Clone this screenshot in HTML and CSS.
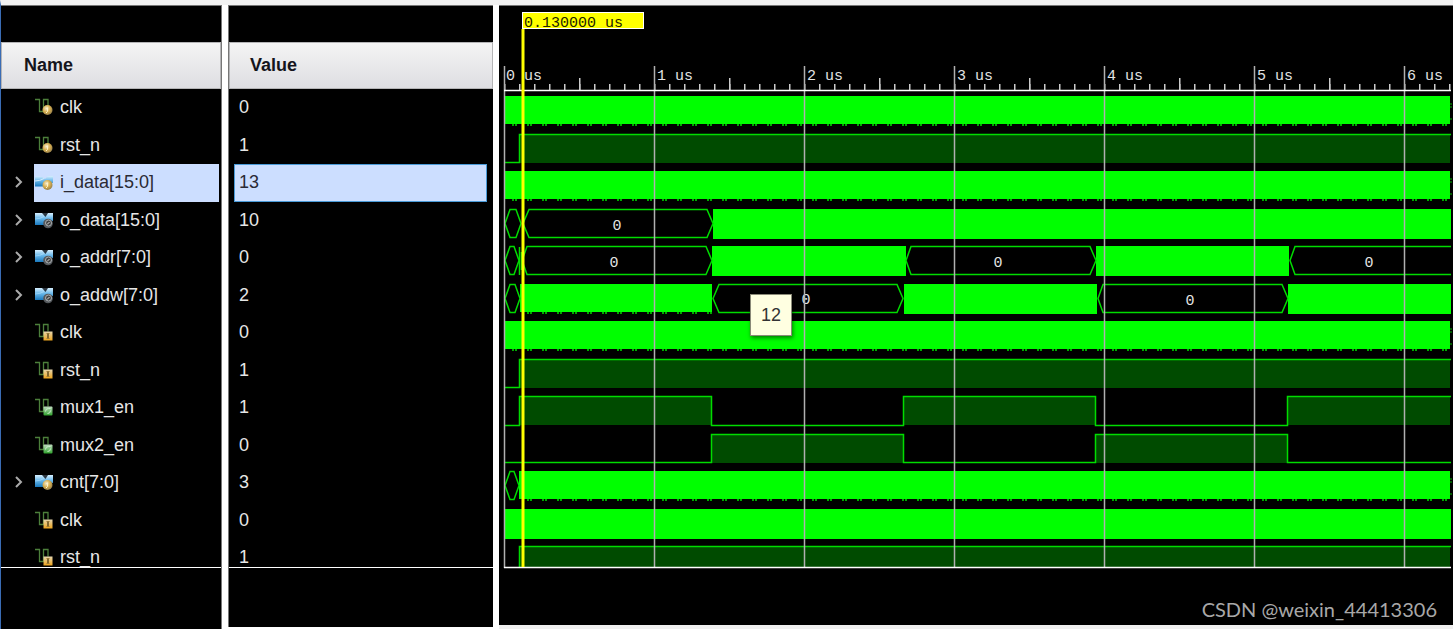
FILE: index.html
```html
<!DOCTYPE html>
<html lang="en">
<head>
<meta charset="utf-8">
<title>Waveform viewer</title>
<link rel="stylesheet" href="styles.css">
</head>
<body>
<svg class="defs" width="0" height="0" aria-hidden="true">
  <defs>
    <linearGradient id="busFill" x1="0" y1="0" x2="0" y2="1">
      <stop offset="0" stop-color="#d6efff"/><stop offset=".45" stop-color="#6cb9ea"/><stop offset="1" stop-color="#1878bd"/>
    </linearGradient>
    <radialGradient id="gold" cx=".4" cy=".35" r=".7">
      <stop offset="0" stop-color="#f4ecd0"/><stop offset=".5" stop-color="#d9b050"/><stop offset="1" stop-color="#8f7a4a"/>
    </radialGradient>
    <linearGradient id="goldSquare" x1="0" y1="0" x2="0" y2="1">
      <stop offset="0" stop-color="#e6d6ae"/><stop offset="1" stop-color="#eda51e"/>
    </linearGradient>
    <linearGradient id="greenSquare" x1="0" y1="0" x2="0" y2="1">
      <stop offset="0" stop-color="#c0dcc0"/><stop offset="1" stop-color="#2fa32c"/>
    </linearGradient>
    <symbol id="wire" viewBox="0 0 18 18"><path d="M0 1.500h4.500v12h4M8.500 14V1.500h4.500v7" fill="none" stroke="#4c7f3b" stroke-width="1.300"/></symbol>
    <symbol id="bus" viewBox="0 0 18 18"><path d="M0 2h18v8l-5-1-4 5H0z" fill="url(#busFill)"/><path d="M7 2l3.500 4L13 2z" fill="#101820" opacity=".85"/><path d="M0 8q5 0 9-2.500" stroke="#b9e4ff" stroke-width=".8" fill="none" opacity=".7"/></symbol>
    <symbol id="bus-light" viewBox="0 0 18 18"><path d="M0 3.500h5q3 0 5 2.500Q12 3 14 3h4v7h-5l-4 3.500H0z" fill="url(#busFill)"/><path d="M0 8q5 0 9-2.500" stroke="#d6efff" fill="none"/></symbol>
    <symbol id="ball" viewBox="0 0 18 18"><circle cx="12.500" cy="12" r="5" fill="url(#gold)"/><path d="M12.500 9.500v4l-1.500 1.500" stroke="#fff4c8" fill="none"/></symbol>
    <symbol id="sig-in" viewBox="0 0 18 18"><use href="#wire"/><use href="#ball"/></symbol>
    <symbol id="sig-reg" viewBox="0 0 18 18"><use href="#wire"/><rect x="8.500" y="8.500" width="9" height="9" fill="url(#goldSquare)"/><path d="M13 10.500v5" stroke="#5f4a1c" stroke-width="1.500" fill="none"/><path d="M11.500 10.500h3M11.500 15.500h3" stroke="#9a7a34" fill="none"/></symbol>
    <symbol id="sig-wire" viewBox="0 0 18 18"><use href="#wire"/><rect x="8.500" y="8.500" width="9" height="9" rx="1" fill="url(#greenSquare)"/><path d="M10.500 13.500q0-3 3-3h2M15.500 12.500q0 3-3 3" stroke="#cdeccd" fill="none"/></symbol>
    <symbol id="bus-in" viewBox="0 0 18 18"><use href="#bus"/><use href="#ball"/></symbol>
    <symbol id="bus-port" viewBox="0 0 18 18"><use href="#bus-light"/><use href="#ball"/></symbol>
    <symbol id="bus-out" viewBox="0 0 18 18"><use href="#bus"/><circle cx="13" cy="12.500" r="4.800" fill="#55595d"/><circle cx="13.500" cy="12" r="3" fill="#444" stroke="#a8adb0"/><path d="M12 13.500l2.500-2.500" stroke="#ddd"/></symbol>
  </defs>
</svg>
<div class="viewer">
  <section class="panel names">
    <h2 class="head">Name</h2>
    <ul class="rows">
      <li class="row"><svg class="icon"><use href="#sig-in"/></svg><span>clk</span></li>
      <li class="row"><svg class="icon"><use href="#sig-in"/></svg><span>rst_n</span></li>
      <li class="row selected"><button class="expand" aria-label="Expand i_data"><svg class="chevron" viewBox="0 0 8 12"><path d="M1 1l5 5-5 5"/></svg></button><svg class="icon"><use href="#bus-port"/></svg><span>i_data[15:0]</span></li>
      <li class="row"><button class="expand" aria-label="Expand o_data"><svg class="chevron" viewBox="0 0 8 12"><path d="M1 1l5 5-5 5"/></svg></button><svg class="icon"><use href="#bus-out"/></svg><span>o_data[15:0]</span></li>
      <li class="row"><button class="expand" aria-label="Expand o_addr"><svg class="chevron" viewBox="0 0 8 12"><path d="M1 1l5 5-5 5"/></svg></button><svg class="icon"><use href="#bus-out"/></svg><span>o_addr[7:0]</span></li>
      <li class="row"><button class="expand" aria-label="Expand o_addw"><svg class="chevron" viewBox="0 0 8 12"><path d="M1 1l5 5-5 5"/></svg></button><svg class="icon"><use href="#bus-out"/></svg><span>o_addw[7:0]</span></li>
      <li class="row"><svg class="icon"><use href="#sig-reg"/></svg><span>clk</span></li>
      <li class="row"><svg class="icon"><use href="#sig-reg"/></svg><span>rst_n</span></li>
      <li class="row"><svg class="icon"><use href="#sig-wire"/></svg><span>mux1_en</span></li>
      <li class="row"><svg class="icon"><use href="#sig-wire"/></svg><span>mux2_en</span></li>
      <li class="row"><button class="expand" aria-label="Expand cnt"><svg class="chevron" viewBox="0 0 8 12"><path d="M1 1l5 5-5 5"/></svg></button><svg class="icon"><use href="#bus-in"/></svg><span>cnt[7:0]</span></li>
      <li class="row"><svg class="icon"><use href="#sig-reg"/></svg><span>clk</span></li>
      <li class="row"><svg class="icon"><use href="#sig-reg"/></svg><span>rst_n</span></li>
    </ul>
  </section>
  <section class="panel values">
    <h2 class="head">Value</h2>
    <ul class="rows">
      <li class="row">0</li>
      <li class="row">1</li>
      <li class="row selected">13</li>
      <li class="row">10</li>
      <li class="row">0</li>
      <li class="row">2</li>
      <li class="row">0</li>
      <li class="row">1</li>
      <li class="row">1</li>
      <li class="row">0</li>
      <li class="row">3</li>
      <li class="row">0</li>
      <li class="row">1</li>
    </ul>
  </section>
  <section class="panel waves">
    <svg class="chart" role="img" aria-label="Signal waveforms, 0 to 6 microseconds">
      <defs>
        <pattern id="minor" x="0" y="78" width="15" height="6" patternUnits="userSpaceOnUse"><rect width="1.500" height="6" fill="#ccc"/></pattern>
        <pattern id="half" x="75" y="72" width="150" height="12" patternUnits="userSpaceOnUse"><rect width="1.500" height="12" fill="#ccc"/></pattern>
        <pattern id="dash" x="8" width="15" height="600" patternUnits="userSpaceOnUse"><rect width="2" height="600" fill="#00a800"/><rect x="3" width="2" height="600" fill="#00a800"/></pattern>
      </defs>
      <g transform="translate(5 0)">
        <!-- clocks and busy buses -->
        <g class="busy">
          <path d="M0 90h946v28H0zM0 165h946v28H0zM209 203h738v30H209zM208 240h194v30H208zM592 240h193v30H592zM16 278h192v28H16zM400 278h193v30H400zM784 278h163v30H784zM0 315h946v28H0zM15 465h931v28H15zM0 503h947v30H0z"/>
        </g>
        <g fill="url(#dash)">
          <path d="M0 118h946v2H0zM0 193h946v2H0zM16 306h192v2H16zM0 343h946v2H0zM15 493h931v2H15z"/>
        </g>
        <path class="edge" d="M946 98h2M946 101h2M946 113h2M946 173h2M946 176h2M946 188h2M946 323h2M946 326h2M946 338h2M946 473h2M946 476h2M946 488h2"/>
        <!-- logic levels -->
        <g class="high">
          <path d="M16 129h930v28H16zM16 354h930v28H16zM16 391h191v28H16zM399 391h192v28H399zM783 391h163v28H783zM207 429h192v28H207zM591 429h192v28H591zM16 541h930v20H16z"/>
        </g>
        <g class="level">
          <path d="M0 156.500h15.500v-28H947"/>
          <path d="M0 381.500h15.500v-28H947"/>
          <path d="M0 419.500h15.500v-29h192v29h192v-29h192v29h192v-29H947"/>
          <path d="M0 456.500h207.500v-28h192v28h192v-28h192v28H947"/>
          <path d="M15.500 561v-20.500H947"/>
        </g>
        <!-- bus values -->
        <g class="bus">
          <path d="M1 217.500l5-14h6l5 14-5 14H6zM19 217.500l6-14h178l6 14-6 14H25z"/>
          <path d="M1 254.500l5-14h4l5 14-5 14H6zM18 254.500l5-14h179l6 14-6 14H23zM402 254.500l5-14h179l6 14-6 14H407zM947 240.500H791l-5 14 5 14H947"/>
          <path d="M1 292.500l5-14h5l5 14-5 14H6zM209 292.500l6-14h178l6 14-6 14H215zM594 292.500l5-14h179l6 14-6 14H599z"/>
          <path d="M1 479.500l5-14h4l5 14-5 14H6z"/>
          <path d="M15.500 241v28M17.500 246v18"/>
        </g>
        <g class="mono mid">
          <text x="113" y="224">0</text>
          <text x="110" y="261">0</text>
          <text x="494" y="261">0</text>
          <text x="865" y="261">0</text>
          <text x="302" y="298">0</text>
          <text x="686" y="299">0</text>
        </g>
        <!-- time ruler -->
        <rect y="78" width="947" height="6" fill="url(#minor)"/>
        <rect y="72" width="947" height="12" fill="url(#half)"/>
        <path class="grid" d="M.5 60v502M150.500 60v502M300.500 60v502M450.500 60v502M600.500 60v502M750.500 60v502M900.500 60v502"/>
        <path class="axis" d="M0 84.500h947M0 561.500h947"/>
        <g class="mono">
          <text x="2" y="74">0 us</text>
          <text x="153" y="74">1 us</text>
          <text x="303" y="74">2 us</text>
          <text x="453" y="74">3 us</text>
          <text x="603" y="74">4 us</text>
          <text x="753" y="74">5 us</text>
          <text x="903" y="74">6 us</text>
        </g>
        <!-- cursor -->
        <rect class="flag" x="18.500" y="6.500" width="121" height="16"/>
        <path class="cursor" d="M19 23v538"/>
        <text class="mono dark" x="20" y="21">0.130000 us</text>
      </g>
    </svg>
    <div class="tip" role="tooltip">12</div>
    <p class="credit">CSDN @weixin_44413306</p>
  </section>
</div>
</body>
</html>
```

FILE: styles.css
```css
* { box-sizing: border-box; }

body {
  margin: 0;
  background: #fff;
  font: 18px/24px "Liberation Sans", Arial, sans-serif;
  color: #e6e6e6;
}

.defs { position: absolute; }

.viewer {
  display: flex;
  gap: 6px;
  min-height: 100vh;
  border-top: 5px solid #f2f2f2;
  border-left: 1px solid #3a6cb4;
}

.panel {
  background: #000;
  border-top: 1px solid #777;
}

.names {
  flex: 0 0 221px;
  padding-top: 36px;
  border-right: 1px solid #777;
}

.values {
  flex: 0 0 265px;
  padding-top: 36px;
  margin-bottom: 2px;
  border-left: 1px solid #777;
}

.waves {
  position: relative;
  flex: 1;
  min-width: 0;
  margin-bottom: 4px;
  box-shadow: 0 4px #f0f0f0;
}

.head {
  height: 47px;
  margin: 0;
  padding: 0 22px;
  border: 1px solid #b4b4b6;
  background: linear-gradient(#f4f4f4, #dedee2);
  color: #15151c;
  font-size: 18px;
  line-height: 45px;
}

.values .head { padding-left: 20px; }

.rows {
  display: grid;
  grid-template-rows: repeat(6, 38px 37px) 28px;
  margin: 0;
  padding: 0;
  overflow: hidden;
  border-bottom: 1px solid #fff;
  list-style: none;
}

.row {
  display: flex;
  align-items: center;
  height: 37px;
  padding-bottom: 2px;
}

.names .row {
  gap: 7px;
  padding-left: 34px;
}

.names .row:has(.expand) { padding-left: 0; }

.names .selected {
  height: 38px;
  background: linear-gradient(90deg, #000 33px, #ccdeff 33px);
  border-right: 2px solid #000;
  color: #2a2a34;
}

.values .row { padding-left: 10px; }

.values .selected {
  height: 38px;
  margin: 0 6px 0 5px;
  padding-left: 4px;
  border: 1px solid #4a9bd8;
  background: #ccdeff;
  color: #2a2a34;
}

.icon {
  flex: none;
  width: 18px;
  height: 18px;
}

.expand {
  display: flex;
  justify-content: center;
  width: 27px;
  padding: 0 0 0 8px;
  border: 0;
  background: none;
}

.chevron {
  width: 8px;
  height: 12px;
  fill: none;
  stroke: #aaa;
  stroke-width: 2;
}

.chart {
  display: block;
  width: 100%;
  height: 564px;
}

.busy { fill: #0f0; }
.edge { stroke: #00b400; }
.high { fill: #004b00; }

.level,
.bus {
  fill: none;
  stroke: #00dc00;
  stroke-width: 1.5;
}

.grid {
  stroke: #b0b0b0;
  stroke-width: 1.5;
}

.axis {
  stroke: #fff;
  stroke-width: 1.5;
}

.cursor {
  stroke: #ff0;
  stroke-width: 3;
}

.flag {
  fill: #ff0;
  stroke: #fff;
}

.mono {
  fill: #e4e4e4;
  font: 15px "Liberation Mono", monospace;
}

.mid { text-anchor: middle; }
.dark { fill: #222200; }

.tip {
  position: absolute;
  top: 288px;
  left: 251px;
  padding: 8px 10px;
  border: 1px solid #8a8a78;
  background: #ffffe1;
  box-shadow: 1px 2px 4px rgba(0, 0, 0, .5);
  color: #333;
}

.credit {
  margin: 0;
  padding: 26px 16px 0;
  color: #a8a8a8;
  font: 20px/26px Lato, sans-serif;
  text-align: right;
}
```
